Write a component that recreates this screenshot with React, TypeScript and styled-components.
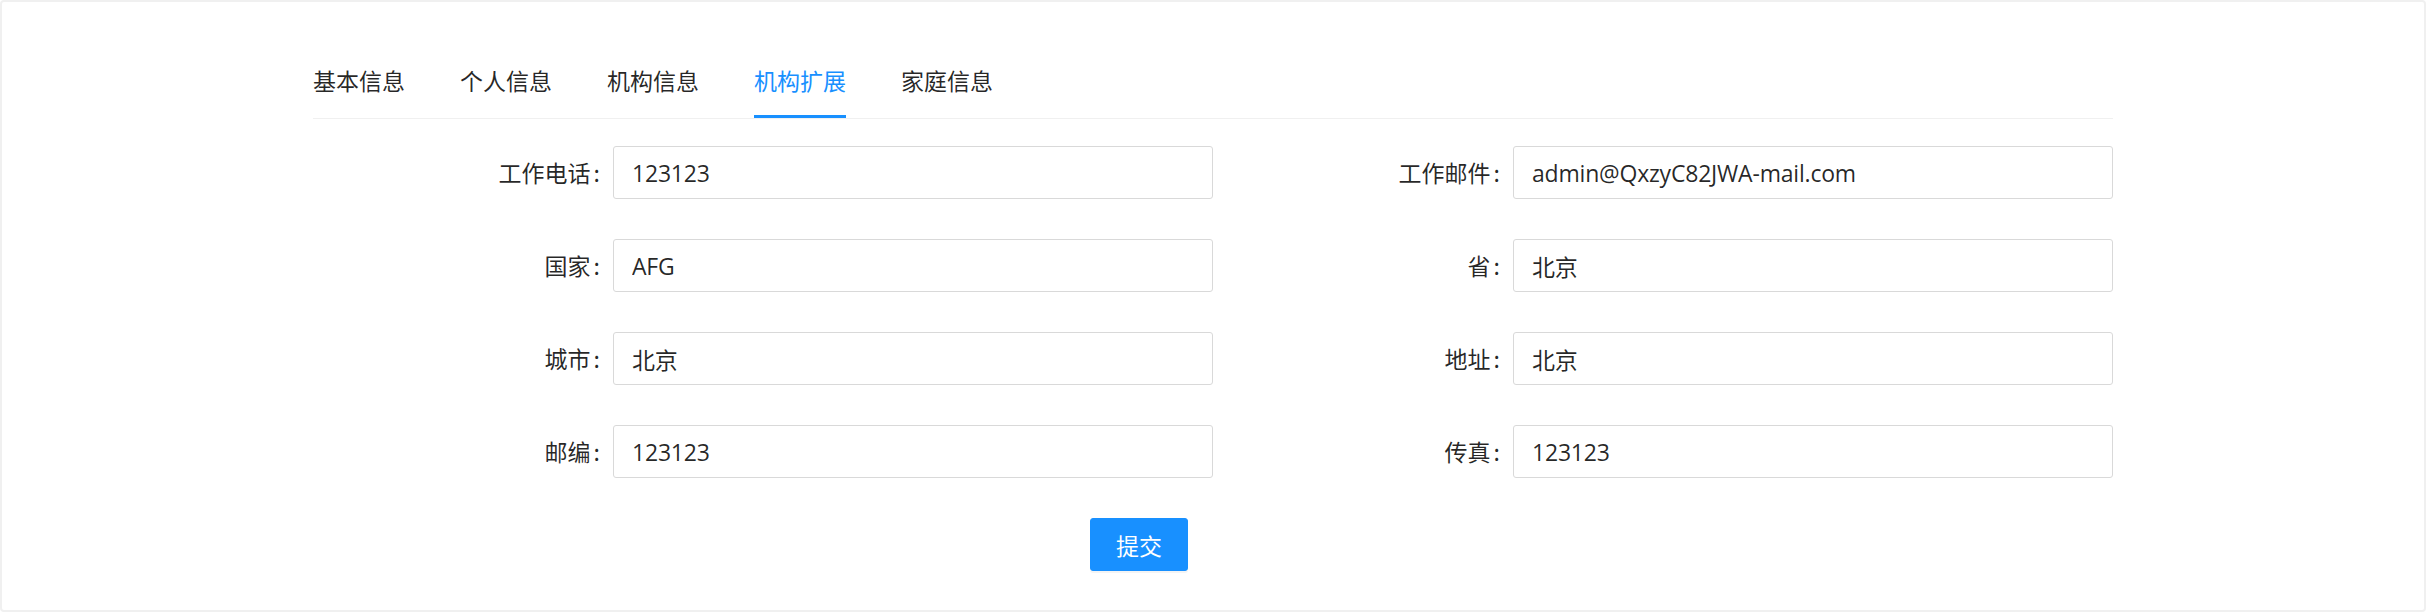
import { createGlobalStyle } from 'styled-components';
import styled from 'styled-components';

const GlobalStyle = createGlobalStyle`
    html, body {
        margin: 0;
        padding: 0;
        background: #ffffff;
    }
    body {
        font-family: "Open Sans", "Noto Sans CJK SC", sans-serif;
        color: rgba(0, 0, 0, 0.85);
    }
    * {
        box-sizing: border-box;
    }
`;

const tabs = ['基本信息', '个人信息', '机构信息', '机构扩展', '家庭信息'];
const activeTab = '机构扩展';

const fields: { label: string; value: string }[][] = [
    [
        { label: '工作电话', value: '123123' },
        { label: '工作邮件', value: 'admin@QxzyC82JWA-mail.com' }
    ],
    [
        { label: '国家', value: 'AFG' },
        { label: '省', value: '北京' }
    ],
    [
        { label: '城市', value: '北京' },
        { label: '地址', value: '北京' }
    ],
    [
        { label: '邮编', value: '123123' },
        { label: '传真', value: '123123' }
    ]
];

export default function App() {
    return (
        <>
            <GlobalStyle />
            <Card>
                <Content>
                    <TabNav>
                        {tabs.map(tab => (
                            <Tab key={tab} active={tab === activeTab}>
                                {tab}
                            </Tab>
                        ))}
                    </TabNav>
                    <Form>
                        {fields.map((row, i) => (
                            <FormRow key={i}>
                                {row.map(field => (
                                    <FormItem key={field.label}>
                                        <Label>{field.label}</Label>
                                        <InputWrap>
                                            <Input defaultValue={field.value} />
                                        </InputWrap>
                                    </FormItem>
                                ))}
                            </FormRow>
                        ))}
                        <Actions>
                            <SubmitButton type="button">提交</SubmitButton>
                        </Actions>
                    </Form>
                </Content>
            </Card>
        </>
    );
}

const Card = styled.div`
    width: 100%;
    height: 612px;
    border: 2px solid #f0f0f0;
    border-radius: 4px;
    padding: 40px;
    background: #fff;
`;

const Content = styled.div`
    width: 1800px;
    margin: 0 auto;
`;

const TabNav = styled.div`
    display: flex;
    gap: 55px;
    border-bottom: 1.5px solid #f0f0f0;
    margin-bottom: 27px;
`;

const Tab = styled.div<{ active: boolean }>`
    padding: 20px 0;
    font-size: 23px;
    line-height: 36px;
    font-family: "Noto Sans CJK SC", sans-serif;
    color: ${props => (props.active ? '#1890ff' : 'rgba(0, 0, 0, 0.85)')};
    box-shadow: ${props => (props.active ? 'inset 0 -3px 0 #1890ff' : 'none')};
    cursor: pointer;
`;

const Form = styled.div`
    display: flex;
    flex-direction: column;
`;

const FormRow = styled.div`
    display: grid;
    grid-template-columns: 1fr 1fr;
    margin-bottom: 40px;
`;

const FormItem = styled.div`
    display: grid;
    grid-template-columns: 1fr 2fr;
    align-items: center;
    height: 53px;
`;

const Label = styled.label`
    text-align: right;
    font-family: "Noto Sans CJK SC", sans-serif;
    font-size: 23px;
    line-height: 53px;
    color: rgba(0, 0, 0, 0.85);
    white-space: nowrap;

    &::after {
        content: ':';
        margin: 0 13px 0 3px;
    }
`;

const InputWrap = styled.div`
    display: flex;
`;

const Input = styled.input`
    width: 100%;
    height: 53px;
    padding: 0 18px;
    border: 1px solid #d9d9d9;
    border-radius: 3px;
    font-family: "Open Sans", "Noto Sans CJK SC", sans-serif;
    font-size: 23px;
    letter-spacing: -0.2px;
    color: rgba(0, 0, 0, 0.85);
    background: #fff;
    outline: none;
`;

const Actions = styled.div`
    width: calc(100% * 22 / 24 + 2px);
    display: flex;
    justify-content: center;
`;

const SubmitButton = styled.button`
    height: 53px;
    padding: 0 25px;
    border: 1px solid #1890ff;
    border-radius: 3px;
    background: #1890ff;
    color: #fff;
    font-family: "Noto Sans CJK SC", sans-serif;
    font-size: 23px;
    box-shadow: 0 2px 0 rgba(0, 0, 0, 0.045);
    cursor: pointer;
`;
